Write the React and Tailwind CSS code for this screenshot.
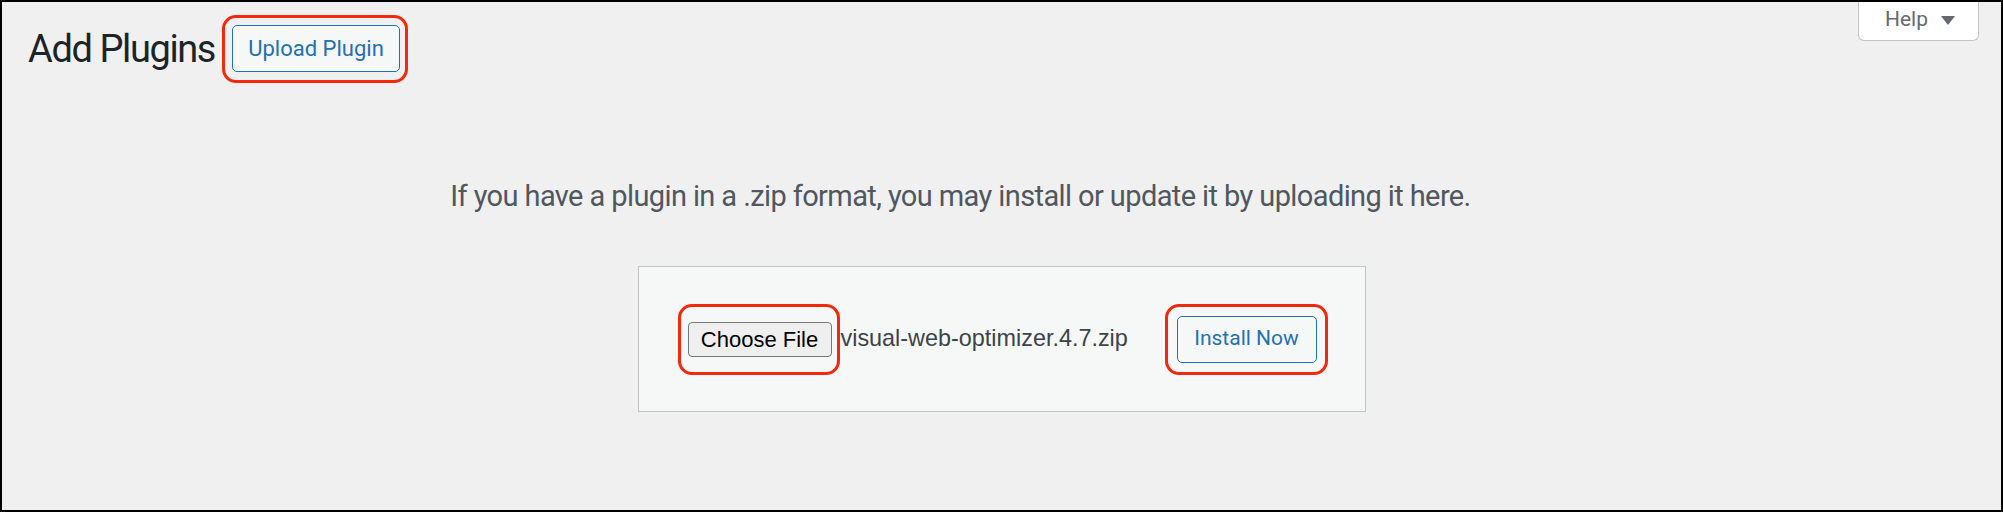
export default function App() {
  const wp = { fontFamily: "Roboto, 'Noto Sans', sans-serif" };
  const helv = { fontFamily: "'Liberation Sans', Arial, sans-serif" };

  return (
    <div
      className="w-[2003px] h-[512px] border-2 border-black bg-[#f0f0f1] flex flex-col"
      style={wp}
    >
      {/* header: title + upload button, help tab on the right */}
      <div className="flex items-start justify-between">
        <div className="flex items-center pl-[26px] mt-[13px]">
          <h1 className="text-[38px] leading-none tracking-[-1.4px] text-[#1d2327] font-normal">Add Plugins</h1>
          <div className="ml-[7px] border-[3px] border-[#f2290d] rounded-[14px] pl-[7px] pr-[5px] pt-[7px] pb-[8px]">
            <button className="w-[168px] h-[47px] border border-[#2271b1] rounded-[5px] bg-[#f6f7f7] text-[#2271b1] text-[22px]">
              Upload Plugin
            </button>
          </div>
        </div>
        <button className="mr-[22px] w-[121px] h-[39px] bg-white border border-t-0 border-[#c3c4c7] rounded-b-[6px] flex items-center pl-[26px] pb-[2px] text-[#646970] text-[21px]">
          Help
          <svg className="ml-[13px]" width="14" height="9" viewBox="0 0 14 9">
            <path d="M0 0 L14 0 L7 9 Z" fill="#646970" />
          </svg>
        </button>
      </div>

      {/* upload area */}
      <p className="mt-[93px] pr-[82px] text-center text-[29px] tracking-[-0.6px] leading-[40px] text-[#50575e]">
        If you have a plugin in a .zip format, you may install or update it by uploading it here.
      </p>

      <div className="mt-[50px] self-center w-[728px] h-[146px] border border-[#c3c4c7] bg-[#f6f7f7] flex items-center justify-between pl-[39px] pr-[37px]">
        <div className="flex items-center">
          <div className="border-[3px] border-[#f2290d] rounded-[14px] pl-[7px] pr-[5px] py-[15px]">
            <button
              className="w-[144px] h-[35px] border border-[#767676] rounded-[4px] bg-[#efefef] text-black text-[22px]"
              style={helv}
            >
              Choose File
            </button>
          </div>
          <span className="ml-[1px] text-[23.4px] text-[#3c434a]" style={helv}>
            visual-web-optimizer.4.7.zip
          </span>
        </div>
        <div className="border-[3px] border-[#f2290d] rounded-[14px] pl-[9px] pr-[8px] py-[9px]">
          <button className="w-[140px] h-[47px] border border-[#2271b1] rounded-[5px] bg-[#f6f7f7] text-[#2271b1] text-[21px]">
            Install Now
          </button>
        </div>
      </div>
    </div>
  );
}
